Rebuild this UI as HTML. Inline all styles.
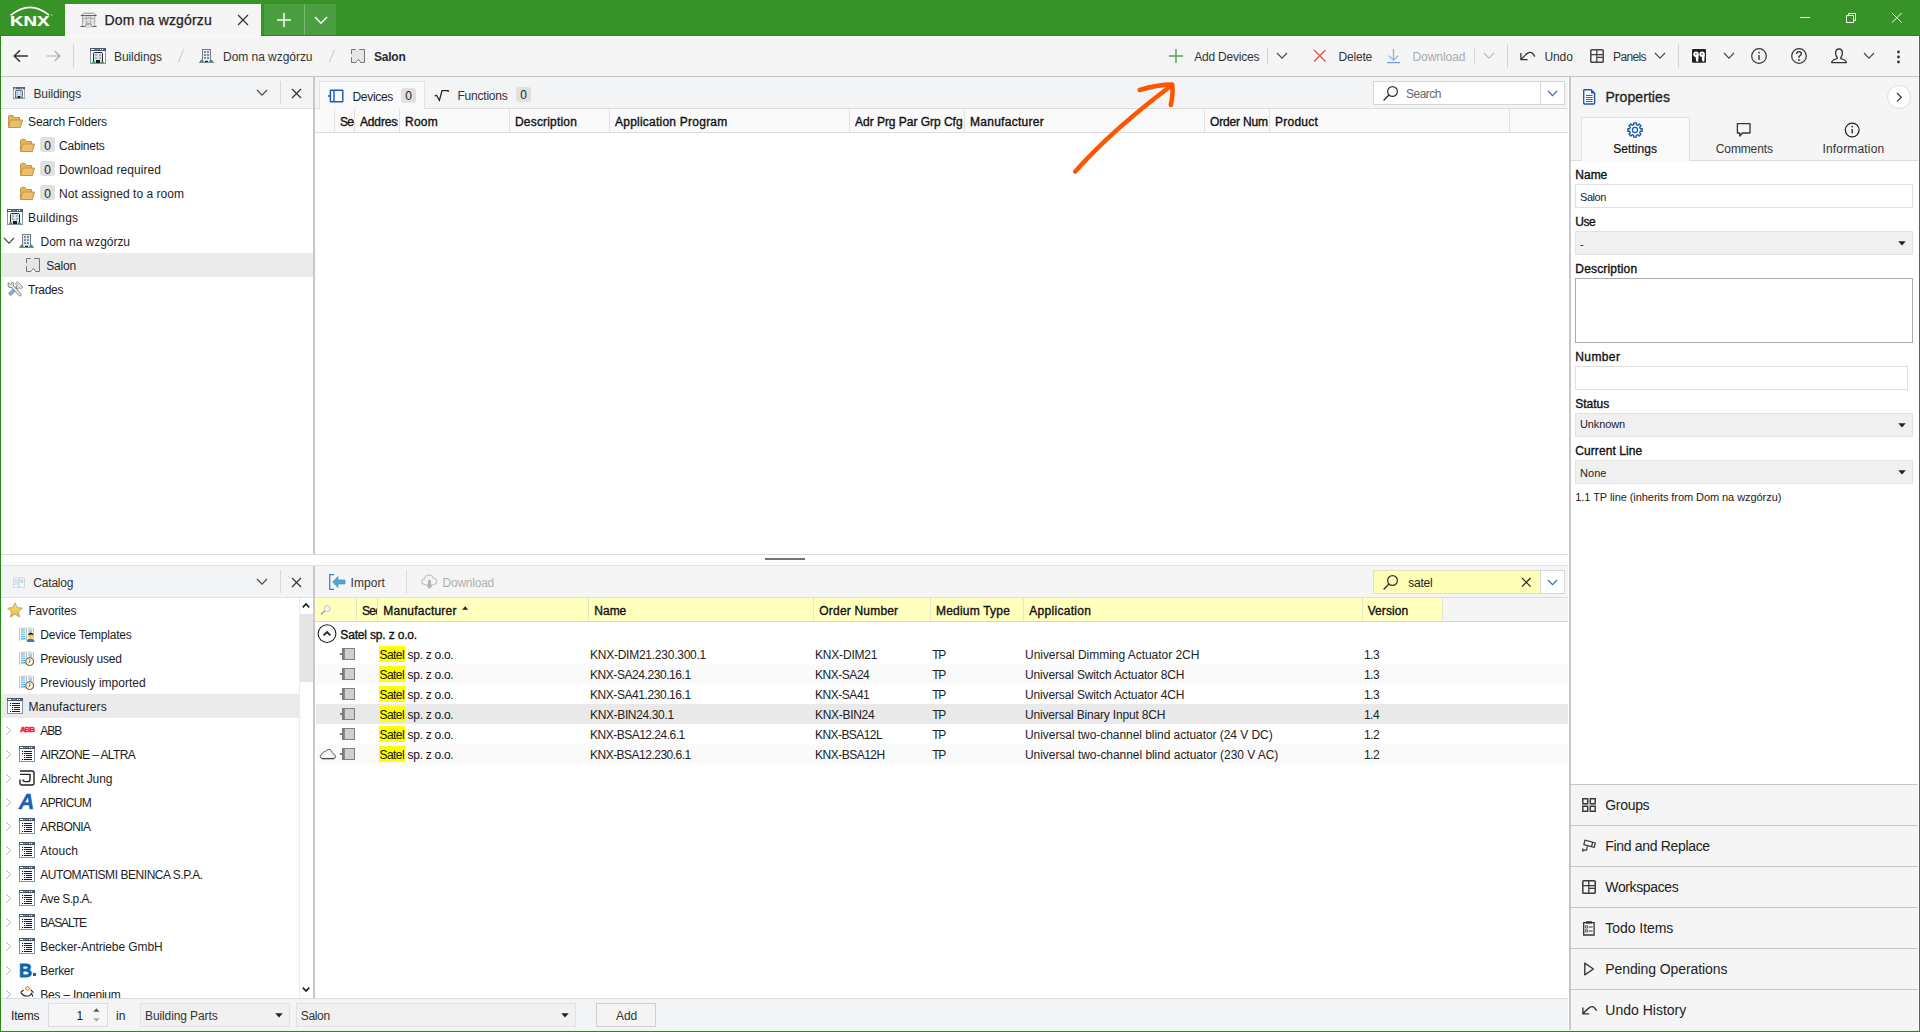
<!DOCTYPE html>
<html lang="en"><head><meta charset="utf-8"><title>ETS6 - Dom na wzgórzu</title>
<style>
html,body{margin:0;padding:0;}
body{width:1920px;height:1032px;overflow:hidden;position:relative;background:#fff;font-family:"Liberation Sans",sans-serif;}
#app{position:absolute;left:0;top:0;width:1920px;height:1032px;overflow:hidden;}
#app div,#app svg,#app span.t{position:absolute;}
#app span.t{white-space:pre;}
#app svg{overflow:visible;}
mark{background:#ffff00;color:inherit;}
</style></head><body><div id="app">
<div style="left:0px;top:0px;width:1920px;height:1032px;background:#268a14;"></div>
<div style="left:1px;top:1px;width:1918px;height:1030px;background:#fff;"></div>
<div style="left:0px;top:0px;width:1920px;height:35px;background:#379228;"></div>
<div style="left:0px;top:35px;width:1920px;height:1px;background:#268a14;"></div>
<svg style="left:8px;top:5px;" width="46" height="24" viewBox="0 0 46 24"><path d="M2.6 10.4 Q22 -5.6 41 10.2" fill="none" stroke="#fff" stroke-width="1.7"/><text x="2" y="20.6" font-family="Liberation Sans, sans-serif" font-weight="700" font-size="14.2" fill="#fff" stroke="#fff" stroke-width="0.15" textLength="39.5" lengthAdjust="spacingAndGlyphs">KNX</text><circle cx="43.8" cy="10" r="0.7" fill="#cfe6cb"/></svg>
<div style="left:65px;top:4px;width:196px;height:33px;background:#f5f5f5;"></div>
<div style="left:264px;top:4px;width:72px;height:31px;background:#79b871;"></div>
<div style="left:264px;top:4px;width:40px;height:31px;background:#4b9f40;"></div>
<div style="left:305px;top:4px;width:31px;height:31px;background:#4b9f40;"></div>
<svg style="left:276px;top:12px;" width="16" height="16" viewBox="0 0 16 16"><path d="M8 1 V15 M1 8 H15" stroke="#fff" stroke-width="1.5" fill="none"/></svg>
<svg style="left:313.5px;top:15.75px;" width="14" height="8.5" viewBox="0 0 14 8.5"><path d="M1 1 L7.0 7.2 L13 1" fill="none" stroke="#fff" stroke-width="1.5"/></svg>
<svg style="left:80px;top:12px;" width="18" height="16" viewBox="0 0 18 16"><path d="M1.2 3.5 L3.8 1.2 H13.6 L16.2 3.5 Z" fill="#ededed" stroke="#777" stroke-width="0.8" stroke-linejoin="round"/><rect x="2.6" y="3.6" width="12.2" height="10.8" fill="#f0f0f0" stroke="#9a9a9a" stroke-width="0.8"/><path d="M0.8 3.5 H16.6" stroke="#5e5e5e" stroke-width="1.1"/><path d="M2.6 6.3 H14.8 M6.2 3.6 V12 M10.8 3.6 V12" stroke="#9a9a9a" stroke-width="0.8" fill="none"/><ellipse cx="4.4" cy="9" rx="1.1" ry="1.9" fill="#fff" stroke="#aaa" stroke-width="0.5"/><ellipse cx="12.8" cy="9" rx="1.1" ry="1.9" fill="#fff" stroke="#aaa" stroke-width="0.5"/><ellipse cx="4.4" cy="2.4" rx="1.6" ry="0.5" fill="#fff"/><ellipse cx="12.8" cy="2.4" rx="1.6" ry="0.5" fill="#fff"/><path d="M7.8 5.6 Q8.5 3.4 9.2 5.6 Z M7.6 11.6 L8.1 8.6 Q8.5 7.4 8.9 8.6 L9.4 11.6 Z" fill="#fff" stroke="#999" stroke-width="0.5"/><path d="M4.8 14.4 L6.6 12 H10.6 L12.4 14.4" fill="#e4e4e4" stroke="#777" stroke-width="0.9"/><rect x="5.2" y="14.2" width="6.8" height="1.5" fill="#d6d6d6"/><path d="M0.6 14.5 H5 M12.2 14.5 H16.6" stroke="#5e5e5e" stroke-width="1.1"/></svg>
<span class="t" style="left:104.50px;top:10.00px;font-size:14px;line-height:20px;color:#222;letter-spacing:0.175px;-webkit-text-stroke:0.25px #222;">Dom na wzgórzu</span>
<svg style="left:236.5px;top:14.0px;" width="12" height="12" viewBox="0 0 12 12"><path d="M1 1 L11 11 M11 1 L1 11" fill="none" stroke="#333" stroke-width="1.2"/></svg>
<div style="left:1800px;top:17px;width:10px;height:1px;background:#fff;"></div>
<svg style="left:1845px;top:12px;" width="13" height="13" viewBox="0 0 13 13"><path d="M1.5 3.5 H8.5 V10.5 H1.5 Z M3.5 3.5 V1.5 H10.5 V8.5 H8.5" fill="none" stroke="#fff" stroke-width="1"/></svg>
<svg style="left:1891.2px;top:12.2px;" width="11.6" height="11.6" viewBox="0 0 11.6 11.6"><path d="M1 1 L10.6 10.6 M10.6 1 L1 10.6" fill="none" stroke="#fff" stroke-width="1.0"/></svg>
<div style="left:1px;top:36px;width:1918px;height:1px;background:#fdfdfd;"></div>
<div style="left:2px;top:37px;width:1916px;height:39px;background:#f5f5f5;"></div>
<div style="left:1px;top:76px;width:1918px;height:1px;background:#c6c6c6;"></div>
<svg style="left:13px;top:49px;" width="16" height="14" viewBox="0 0 16 14"><path d="M15 7 H1.5 M7 1.2 L1.2 7 L7 12.8" fill="none" stroke="#333" stroke-width="1.4"/></svg>
<svg style="left:46px;top:50px;" width="15" height="12" viewBox="0 0 15 12"><path d="M0.5 6 H13.5 M8.8 1 L13.8 6 L8.8 11" fill="none" stroke="#ababab" stroke-width="1.2"/></svg>
<div style="left:73px;top:44px;width:1px;height:24px;background:#d4d4d4;"></div>
<svg style="left:90px;top:48px;" width="16" height="16" viewBox="0 0 16 16"><rect x="0.5" y="0.5" width="15" height="15" fill="#fbfcfd" stroke="#8392a6"/><rect x="0" y="0" width="16" height="3" fill="#46566c"/><rect x="4.4" y="1" width="4.4" height="1" fill="#76869a"/><rect x="1" y="1" width="3" height="1" fill="#fff"/><rect x="10" y="1" width="1.2" height="1" fill="#fff"/><rect x="12" y="1" width="1.2" height="1" fill="#fff"/><rect x="14" y="1" width="1.2" height="1" fill="#e02a1f"/><path d="M3.5 14 V5.5 Q3.5 4.5 4.5 4.5 H11.5 Q12.5 4.5 12.5 5.5 V14" fill="#e4e4e4" stroke="#2a2a2a" stroke-width="1"/><rect x="5" y="6" width="2" height="2" fill="#8fb8d8"/><rect x="9" y="6" width="2" height="2" fill="#8fb8d8"/><rect x="5" y="9" width="2" height="2" fill="#8fb8d8"/><rect x="9" y="9" width="2" height="2" fill="#8fb8d8"/><rect x="6" y="12" width="4" height="3" fill="#1c1c1c"/><path d="M1.8 15 Q2.2 13.4 3.8 13 Q5.4 13.4 5.8 15 Z M10.2 15 Q10.6 13.4 12.2 13 Q13.8 13.4 14.2 15 Z" fill="#2fa044"/><rect x="1" y="15" width="14" height="0.6" fill="#8392a6"/></svg>
<span class="t" style="left:114.00px;top:47.50px;font-size:12px;line-height:18px;color:#333;letter-spacing:-0.078px;">Buildings</span>
<svg style="left:177px;top:49px;" width="8" height="14" viewBox="0 0 8 14"><path d="M6.6 0.5 L1.2 13.5" stroke="#c4c4c4" stroke-width="1" fill="none"/></svg>
<svg style="left:199px;top:49px;" width="15" height="14" viewBox="0 0 15 14"><rect x="3.5" y="0.5" width="8" height="13" fill="#ececec" stroke="#7d7d7d"/><rect x="5" y="2" width="2" height="2" fill="#6f8dbd"/><rect x="5" y="5" width="2" height="2" fill="#6f8dbd"/><rect x="5" y="8" width="2" height="2" fill="#6f8dbd"/><rect x="8" y="2" width="2" height="2" fill="#6f8dbd"/><rect x="8" y="5" width="2" height="2" fill="#6f8dbd"/><rect x="8" y="8" width="2" height="2" fill="#6f8dbd"/><rect x="6" y="11.8" width="3" height="1.4" fill="#1a1a1a"/><path d="M0.6 13.2 Q1 11.4 2.8 10.6 Q4.6 11.4 5 13.2 Z M10 13.2 Q10.4 11.4 12.2 10.6 Q14 11.4 14.4 13.2 Z" fill="#2f9e44"/><rect x="0" y="13" width="15" height="1" fill="#8088a0"/></svg>
<span class="t" style="left:223.00px;top:47.50px;font-size:12px;line-height:18px;color:#333;letter-spacing:-0.039px;">Dom na wzgórzu</span>
<svg style="left:328px;top:49px;" width="8" height="14" viewBox="0 0 8 14"><path d="M6.6 0.5 L1.2 13.5" stroke="#c4c4c4" stroke-width="1" fill="none"/></svg>
<svg style="left:351px;top:49px;" width="14" height="14" viewBox="0 0 14 14"><path d="M0.5 0.5 H13.5 V13.5 H9.6 L7.6 10.4 L4.9 13.5 H0.5 Z" fill="#e6e6e6" stroke="none"/><path d="M4.9 14 L7.6 10.6 L9.6 14 Z" fill="#fff"/><path d="M0.5 5 V0.5 H4.7 M8.2 0.5 H13.5 V13.5 H9.6 L7.6 10.4 L4.9 13.5 H0.5 V8.2" fill="none" stroke="#747474" stroke-width="1"/></svg>
<span class="t" style="left:374.00px;top:47.50px;font-size:12px;line-height:18px;color:#2a2a2a;letter-spacing:-0.234px;font-weight:700;">Salon</span>
<svg style="left:1168px;top:48px;" width="16" height="16" viewBox="0 0 16 16"><path d="M8 1 V15 M1 8 H15" stroke="#4fa54a" stroke-width="1.4" fill="none"/></svg>
<span class="t" style="left:1194.30px;top:47.50px;font-size:12px;line-height:18px;color:#333;letter-spacing:-0.216px;">Add Devices</span>
<div style="left:1267px;top:48px;width:1px;height:16px;background:#d0d0d0;"></div>
<svg style="left:1276.0px;top:52.35px;" width="12" height="7.5" viewBox="0 0 12 7.5"><path d="M1 1 L6.0 6.2 L11 1" fill="none" stroke="#444" stroke-width="1.1"/></svg>
<svg style="left:1313.25px;top:49.25px;" width="13.5" height="13.5" viewBox="0 0 13.5 13.5"><path d="M1 1 L12.5 12.5 M12.5 1 L1 12.5" fill="none" stroke="#d9534f" stroke-width="1.3"/></svg>
<span class="t" style="left:1338.50px;top:47.50px;font-size:12px;line-height:18px;color:#333;letter-spacing:-0.198px;">Delete</span>
<svg style="left:1386px;top:48px;" width="16" height="16" viewBox="0 0 16 16"><path d="M7.5 1 V12 M2.8 7.6 L7.5 12.2 L12.2 7.6" fill="none" stroke="#8db0e0" stroke-width="1.3"/><path d="M1 14.6 H14" stroke="#6f9fe0" stroke-width="1.3"/></svg>
<span class="t" style="left:1412.40px;top:47.50px;font-size:12px;line-height:18px;color:#ababab;letter-spacing:-0.047px;">Download</span>
<div style="left:1474px;top:48px;width:1px;height:16px;background:#d8d8d8;"></div>
<svg style="left:1483.0px;top:52.35px;" width="12" height="7.5" viewBox="0 0 12 7.5"><path d="M1 1 L6.0 6.2 L11 1" fill="none" stroke="#bcbcbc" stroke-width="1.1"/></svg>
<div style="left:1507px;top:44px;width:1px;height:24px;background:#d4d4d4;"></div>
<svg style="left:1520px;top:50px;" width="16" height="12" viewBox="0 0 16 12"><path d="M0.9 2.9 V9.7 H7.6 M1.2 9.4 Q5 5 7.4 3.4 Q11.8 0.4 14.8 6.6" fill="none" stroke="#333" stroke-width="1.3"/></svg>
<span class="t" style="left:1544.40px;top:47.50px;font-size:12px;line-height:18px;color:#333;letter-spacing:-0.072px;">Undo</span>
<svg style="left:1590px;top:49px;" width="14" height="14" viewBox="0 0 14 14"><rect x="0.8" y="0.8" width="12.4" height="12.4" rx="0.8" fill="none" stroke="#444" stroke-width="1.5"/><path d="M0.8 5.7 H13.2 M6.8 0.8 V13.2 M6.8 8.3 H13.2" fill="none" stroke="#444" stroke-width="1.3"/><rect x="7.4" y="6.3" width="5.2" height="1.4" fill="#bbb"/></svg>
<span class="t" style="left:1613.00px;top:47.50px;font-size:12px;line-height:18px;color:#333;letter-spacing:-0.617px;">Panels</span>
<svg style="left:1654.0px;top:52.35px;" width="12" height="7.5" viewBox="0 0 12 7.5"><path d="M1 1 L6.0 6.2 L11 1" fill="none" stroke="#444" stroke-width="1.1"/></svg>
<div style="left:1678px;top:44px;width:1px;height:24px;background:#d4d4d4;"></div>
<svg style="left:1692px;top:49px;" width="14" height="14" viewBox="0 0 14 14"><rect x="0" y="0" width="14" height="13.8" rx="1" fill="#222"/><circle cx="4" cy="5.2" r="2.7" fill="#fff"/><circle cx="10.1" cy="5.2" r="2.7" fill="#fff"/><path d="M3.4 6 H6.6 L6.2 12.6 H4.2 Z M9.5 6 H12.7 L12.3 12.6 H10.3 Z" fill="#fff"/><circle cx="3.9" cy="5" r="0.8" fill="#222"/><circle cx="10" cy="5" r="0.8" fill="#222"/></svg>
<svg style="left:1723.0px;top:52.35px;" width="12" height="7.5" viewBox="0 0 12 7.5"><path d="M1 1 L6.0 6.2 L11 1" fill="none" stroke="#444" stroke-width="1.1"/></svg>
<svg style="left:1750px;top:47px;" width="18" height="18" viewBox="0 0 18 18"><circle cx="9" cy="9" r="7.3" fill="none" stroke="#333" stroke-width="1.2"/><path d="M9 8 V13" stroke="#333" stroke-width="1.4"/><circle cx="9" cy="5.6" r="0.9" fill="#333"/></svg>
<svg style="left:1790px;top:47px;" width="18" height="18" viewBox="0 0 18 18"><circle cx="9" cy="9" r="7.3" fill="none" stroke="#333" stroke-width="1.2"/><path d="M6.6 7 Q6.6 4.6 9 4.6 Q11.4 4.6 11.4 6.8 Q11.4 8.2 9 9.4 V11" fill="none" stroke="#333" stroke-width="1.3"/><circle cx="9" cy="13" r="0.9" fill="#333"/></svg>
<svg style="left:1830px;top:48px;" width="18" height="16" viewBox="0 0 18 16"><path d="M9 1 Q12.4 1 12.4 5 Q12.4 8 10.8 9.4 V10.6 Q15.8 11.6 16.4 14.6 H1.6 Q2.2 11.6 7.2 10.6 V9.4 Q5.6 8 5.6 5 Q5.6 1 9 1 Z" fill="none" stroke="#333" stroke-width="1.3" stroke-linejoin="round"/></svg>
<svg style="left:1863.0px;top:52.35px;" width="12" height="7.5" viewBox="0 0 12 7.5"><path d="M1 1 L6.0 6.2 L11 1" fill="none" stroke="#444" stroke-width="1.1"/></svg>
<svg style="left:1896px;top:50px;" width="5" height="14" viewBox="0 0 5 14"><circle cx="2.5" cy="2" r="1.4" fill="#333"/><circle cx="2.5" cy="7" r="1.4" fill="#333"/><circle cx="2.5" cy="12" r="1.4" fill="#333"/></svg>
<div style="left:1px;top:77px;width:312px;height:31px;background:#f3f4f6;"></div>
<div style="left:1px;top:108px;width:312px;height:1px;background:#dedede;"></div>
<svg style="left:13px;top:87px;" width="12" height="12" viewBox="0 0 16 16"><rect x="0.5" y="0.5" width="15" height="15" fill="#fbfcfd" stroke="#8392a6"/><rect x="0" y="0" width="16" height="3" fill="#46566c"/><rect x="4.4" y="1" width="4.4" height="1" fill="#76869a"/><rect x="1" y="1" width="3" height="1" fill="#fff"/><rect x="10" y="1" width="1.2" height="1" fill="#fff"/><rect x="12" y="1" width="1.2" height="1" fill="#fff"/><rect x="14" y="1" width="1.2" height="1" fill="#e02a1f"/><path d="M3.5 14 V5.5 Q3.5 4.5 4.5 4.5 H11.5 Q12.5 4.5 12.5 5.5 V14" fill="#e4e4e4" stroke="#2a2a2a" stroke-width="1"/><rect x="5" y="6" width="2" height="2" fill="#8fb8d8"/><rect x="9" y="6" width="2" height="2" fill="#8fb8d8"/><rect x="5" y="9" width="2" height="2" fill="#8fb8d8"/><rect x="9" y="9" width="2" height="2" fill="#8fb8d8"/><rect x="6" y="12" width="4" height="3" fill="#1c1c1c"/><path d="M1.8 15 Q2.2 13.4 3.8 13 Q5.4 13.4 5.8 15 Z M10.2 15 Q10.6 13.4 12.2 13 Q13.8 13.4 14.2 15 Z" fill="#2fa044"/><rect x="1" y="15" width="14" height="0.6" fill="#8392a6"/></svg>
<span class="t" style="left:33.50px;top:84.50px;font-size:12px;line-height:18px;color:#333;letter-spacing:-0.134px;">Buildings</span>
<svg style="left:256.0px;top:89.45px;" width="12" height="7.5" viewBox="0 0 12 7.5"><path d="M1 1 L6.0 6.2 L11 1" fill="none" stroke="#444" stroke-width="1.1"/></svg>
<div style="left:280px;top:81px;width:1px;height:23px;background:#d8d8d8;"></div>
<svg style="left:291.2px;top:87.5px;" width="11" height="11" viewBox="0 0 11 11"><path d="M1 1 L10 10 M10 1 L1 10" fill="none" stroke="#333" stroke-width="1.2"/></svg>
<div style="left:313px;top:77px;width:2px;height:477px;background:#c8c8c8;"></div>
<div style="left:1569px;top:77px;width:2px;height:954px;background:#c8c8c8;"></div>
<svg style="left:8px;top:115px;" width="15" height="13" viewBox="0 0 15 13"><path d="M0.5 12.5 V1.5 Q0.5 0.5 1.5 0.5 H5 L6.5 2.5 H11.5 V5" fill="#e6b45a" stroke="#c8924a" stroke-width="1"/><path d="M0.5 12.5 L2.8 5 H14.5 L12.3 12.5 Z" fill="#ecc067" stroke="#c8924a" stroke-width="1" stroke-linejoin="round"/></svg>
<span class="t" style="left:28.10px;top:112.50px;font-size:12px;line-height:18px;color:#1e1e1e;letter-spacing:-0.191px;">Search Folders</span>
<svg style="left:20px;top:139px;" width="15" height="13" viewBox="0 0 15 13"><path d="M0.5 12.5 V1.5 Q0.5 0.5 1.5 0.5 H5 L6.5 2.5 H11.5 V5" fill="#e6b45a" stroke="#c8924a" stroke-width="1"/><path d="M0.5 12.5 L2.8 5 H14.5 L12.3 12.5 Z" fill="#ecc067" stroke="#c8924a" stroke-width="1" stroke-linejoin="round"/></svg>
<div style="left:40px;top:137px;width:15px;height:15px;background:#e0e0e0;border-radius:3px;"></div>
<span class="t" style="left:44.24px;top:136.50px;font-size:12px;line-height:18px;color:#222;letter-spacing:-0.167px;">0</span>
<span class="t" style="left:59.10px;top:136.50px;font-size:12px;line-height:18px;color:#1e1e1e;letter-spacing:-0.234px;">Cabinets</span>
<svg style="left:20px;top:163px;" width="15" height="13" viewBox="0 0 15 13"><path d="M0.5 12.5 V1.5 Q0.5 0.5 1.5 0.5 H5 L6.5 2.5 H11.5 V5" fill="#e6b45a" stroke="#c8924a" stroke-width="1"/><path d="M0.5 12.5 L2.8 5 H14.5 L12.3 12.5 Z" fill="#ecc067" stroke="#c8924a" stroke-width="1" stroke-linejoin="round"/></svg>
<div style="left:40px;top:161px;width:15px;height:15px;background:#e0e0e0;border-radius:3px;"></div>
<span class="t" style="left:44.24px;top:160.50px;font-size:12px;line-height:18px;color:#222;letter-spacing:-0.167px;">0</span>
<span class="t" style="left:59.10px;top:160.50px;font-size:12px;line-height:18px;color:#1e1e1e;letter-spacing:0.074px;">Download required</span>
<svg style="left:20px;top:187px;" width="15" height="13" viewBox="0 0 15 13"><path d="M0.5 12.5 V1.5 Q0.5 0.5 1.5 0.5 H5 L6.5 2.5 H11.5 V5" fill="#e6b45a" stroke="#c8924a" stroke-width="1"/><path d="M0.5 12.5 L2.8 5 H14.5 L12.3 12.5 Z" fill="#ecc067" stroke="#c8924a" stroke-width="1" stroke-linejoin="round"/></svg>
<div style="left:40px;top:185px;width:15px;height:15px;background:#e0e0e0;border-radius:3px;"></div>
<span class="t" style="left:44.24px;top:184.50px;font-size:12px;line-height:18px;color:#222;letter-spacing:-0.167px;">0</span>
<span class="t" style="left:59.10px;top:184.50px;font-size:12px;line-height:18px;color:#1e1e1e;letter-spacing:0.042px;">Not assigned to a room</span>
<svg style="left:7px;top:209px;" width="16" height="16" viewBox="0 0 16 16"><rect x="0.5" y="0.5" width="15" height="15" fill="#fbfcfd" stroke="#8392a6"/><rect x="0" y="0" width="16" height="3" fill="#46566c"/><rect x="4.4" y="1" width="4.4" height="1" fill="#76869a"/><rect x="1" y="1" width="3" height="1" fill="#fff"/><rect x="10" y="1" width="1.2" height="1" fill="#fff"/><rect x="12" y="1" width="1.2" height="1" fill="#fff"/><rect x="14" y="1" width="1.2" height="1" fill="#e02a1f"/><path d="M3.5 14 V5.5 Q3.5 4.5 4.5 4.5 H11.5 Q12.5 4.5 12.5 5.5 V14" fill="#e4e4e4" stroke="#2a2a2a" stroke-width="1"/><rect x="5" y="6" width="2" height="2" fill="#8fb8d8"/><rect x="9" y="6" width="2" height="2" fill="#8fb8d8"/><rect x="5" y="9" width="2" height="2" fill="#8fb8d8"/><rect x="9" y="9" width="2" height="2" fill="#8fb8d8"/><rect x="6" y="12" width="4" height="3" fill="#1c1c1c"/><path d="M1.8 15 Q2.2 13.4 3.8 13 Q5.4 13.4 5.8 15 Z M10.2 15 Q10.6 13.4 12.2 13 Q13.8 13.4 14.2 15 Z" fill="#2fa044"/><rect x="1" y="15" width="14" height="0.6" fill="#8392a6"/></svg>
<span class="t" style="left:28.10px;top:208.50px;font-size:12px;line-height:18px;color:#1e1e1e;letter-spacing:0.144px;">Buildings</span>
<svg style="left:3.0px;top:237.45px;" width="12" height="7.5" viewBox="0 0 12 7.5"><path d="M1 1 L6.0 6.2 L11 1" fill="none" stroke="#444" stroke-width="1.1"/></svg>
<svg style="left:19px;top:234px;" width="15" height="14" viewBox="0 0 15 14"><rect x="3.5" y="0.5" width="8" height="13" fill="#ececec" stroke="#7d7d7d"/><rect x="5" y="2" width="2" height="2" fill="#6f8dbd"/><rect x="5" y="5" width="2" height="2" fill="#6f8dbd"/><rect x="5" y="8" width="2" height="2" fill="#6f8dbd"/><rect x="8" y="2" width="2" height="2" fill="#6f8dbd"/><rect x="8" y="5" width="2" height="2" fill="#6f8dbd"/><rect x="8" y="8" width="2" height="2" fill="#6f8dbd"/><rect x="6" y="11.8" width="3" height="1.4" fill="#1a1a1a"/><path d="M0.6 13.2 Q1 11.4 2.8 10.6 Q4.6 11.4 5 13.2 Z M10 13.2 Q10.4 11.4 12.2 10.6 Q14 11.4 14.4 13.2 Z" fill="#2f9e44"/><rect x="0" y="13" width="15" height="1" fill="#8088a0"/></svg>
<span class="t" style="left:40.50px;top:232.50px;font-size:12px;line-height:18px;color:#1e1e1e;letter-spacing:-0.039px;">Dom na wzgórzu</span>
<div style="left:1px;top:253px;width:312px;height:24px;background:#ebebeb;"></div>
<svg style="left:26px;top:258px;" width="14" height="14" viewBox="0 0 14 14"><path d="M0.5 0.5 H13.5 V13.5 H9.6 L7.6 10.4 L4.9 13.5 H0.5 Z" fill="#e6e6e6" stroke="none"/><path d="M4.9 14 L7.6 10.6 L9.6 14 Z" fill="#fff"/><path d="M0.5 5 V0.5 H4.7 M8.2 0.5 H13.5 V13.5 H9.6 L7.6 10.4 L4.9 13.5 H0.5 V8.2" fill="none" stroke="#747474" stroke-width="1"/></svg>
<span class="t" style="left:46.30px;top:256.50px;font-size:12px;line-height:18px;color:#1e1e1e;letter-spacing:-0.221px;">Salon</span>
<svg style="left:7px;top:281px;" width="16" height="16" viewBox="0 0 16 16"><g fill="none"><path d="M2.4 13.8 L7 9.2" stroke="#5a8cc8" stroke-width="3.4" stroke-linecap="butt"/><path d="M2.4 13.8 L7 9.2" stroke="#86b2e0" stroke-width="2.2" stroke-linecap="butt"/><path d="M7 9.2 L10.6 5.6" stroke="#8f8f8f" stroke-width="2.2"/><path d="M10.4 0.8 L15.8 5.9 L13.8 7.9 L12.2 6.6 L10.8 7.8 L8.9 6 L10.2 4.8 L8.4 2.7 Z" fill="#e2e2e2" stroke="#868686" stroke-width="0.9" stroke-linejoin="round"/><path d="M4.6 4.6 L13 13.6" stroke="#868686" stroke-width="3.4" stroke-linecap="round"/><circle cx="3.8" cy="3.8" r="3.2" fill="#868686"/><path d="M4.6 4.6 L13 13.6" stroke="#ececec" stroke-width="1.7" stroke-linecap="round"/><circle cx="3.8" cy="3.8" r="2.3" fill="#ececec"/><path d="M0.2 0.2 L3.6 3.8 L5.6 0.2 Z" fill="#fff"/><path d="M1.4 1.6 L3.6 3.9 L4.9 1.4" stroke="#868686" stroke-width="0.9" stroke-linejoin="round"/></g></svg>
<span class="t" style="left:28.10px;top:280.50px;font-size:12px;line-height:18px;color:#1e1e1e;letter-spacing:-0.318px;">Trades</span>
<div style="left:315px;top:77px;width:1253px;height:31px;background:#f3f4f6;"></div>
<div style="left:315px;top:108px;width:1253px;height:1px;background:#dcdcdc;"></div>
<div style="left:319px;top:81px;width:106px;height:28px;background:#fafafa;border:1px solid #e2e2e2;border-bottom:none;box-sizing:border-box;"></div>
<svg style="left:328px;top:89px;" width="16" height="14" viewBox="0 0 16 14"><rect x="2.4" y="1.2" width="12.4" height="11.6" rx="0.3" fill="none" stroke="#1f56b0" stroke-width="1.4"/><path d="M6 1.2 V12.8 M0 7 H2.2" stroke="#1f56b0" stroke-width="1.4" fill="none"/></svg>
<span class="t" style="left:352.50px;top:87.50px;font-size:12px;line-height:18px;color:#1e1e1e;letter-spacing:-0.312px;">Devices</span>
<div style="left:401px;top:88px;width:15px;height:15px;background:#e0e0e0;border-radius:3px;"></div>
<span class="t" style="left:405.24px;top:86.80px;font-size:12px;line-height:18px;color:#222;letter-spacing:-0.167px;">0</span>
<svg style="left:434px;top:89px;" width="15" height="13" viewBox="0 0 15 13"><path d="M0.6 7 L2.5 6.3 L5.4 11.4 L8 1.5 H14.2 V3" fill="none" stroke="#222" stroke-width="1.25"/></svg>
<span class="t" style="left:457.50px;top:86.50px;font-size:12px;line-height:18px;color:#333;letter-spacing:-0.226px;">Functions</span>
<div style="left:516px;top:87px;width:15px;height:15px;background:#e0e0e0;border-radius:3px;"></div>
<span class="t" style="left:520.24px;top:85.80px;font-size:12px;line-height:18px;color:#222;letter-spacing:-0.167px;">0</span>
<div style="left:1373px;top:81px;width:168px;height:24px;background:#fff;border:1px solid #d6d6d6;box-sizing:border-box;"></div>
<div style="left:1540px;top:81px;width:25px;height:24px;background:#fff;border:1px solid #d6d6d6;box-sizing:border-box;"></div>
<svg style="left:1382.5px;top:85.5px;" width="15" height="15" viewBox="0 0 15 15"><circle cx="9.5" cy="5.5" r="4.9" fill="none" stroke="#333" stroke-width="1.2"/><path d="M6 9 L0.6 14.4" stroke="#333" stroke-width="1.4"/></svg>
<span class="t" style="left:1406.00px;top:84.50px;font-size:12px;line-height:18px;color:#666;letter-spacing:-0.505px;">Search</span>
<svg style="left:1546.5px;top:89.5px;" width="11" height="7" viewBox="0 0 11 7"><path d="M1 1 L5.5 5.7 L10 1" fill="none" stroke="#3468c0" stroke-width="1.15"/></svg>
<div style="left:315px;top:109px;width:1253px;height:23px;background:#fafafa;"></div>
<div style="left:315px;top:132px;width:1253px;height:1px;background:#dcdcdc;"></div>
<div style="left:334px;top:109px;width:1px;height:23px;background:#e2e2e2;"></div>
<div style="left:354px;top:109px;width:1px;height:23px;background:#e2e2e2;"></div>
<div style="left:399px;top:109px;width:1px;height:23px;background:#e2e2e2;"></div>
<div style="left:509px;top:109px;width:1px;height:23px;background:#e2e2e2;"></div>
<div style="left:609px;top:109px;width:1px;height:23px;background:#e2e2e2;"></div>
<div style="left:849px;top:109px;width:1px;height:23px;background:#e2e2e2;"></div>
<div style="left:964px;top:109px;width:1px;height:23px;background:#e2e2e2;"></div>
<div style="left:1204px;top:109px;width:1px;height:23px;background:#e2e2e2;"></div>
<div style="left:1269px;top:109px;width:1px;height:23px;background:#e2e2e2;"></div>
<div style="left:1509px;top:109px;width:1px;height:23px;background:#e2e2e2;"></div>
<div style="left:340px;top:112.5px;width:13.6px;height:18px;overflow:hidden;">
<span class="t" style="left:0.00px;top:0.00px;font-size:12px;line-height:18px;color:#111;letter-spacing:-0.763px;-webkit-text-stroke:0.35px #111;">Sec</span>
</div>
<div style="left:360px;top:112.5px;width:38px;height:18px;overflow:hidden;">
<span class="t" style="left:0.00px;top:0.00px;font-size:12px;line-height:18px;color:#111;letter-spacing:-0.157px;-webkit-text-stroke:0.35px #111;">Address</span>
</div>
<span class="t" style="left:405.00px;top:112.50px;font-size:12px;line-height:18px;color:#111;letter-spacing:0.246px;-webkit-text-stroke:0.35px #111;">Room</span>
<span class="t" style="left:515.00px;top:112.50px;font-size:12px;line-height:18px;color:#111;letter-spacing:0.179px;-webkit-text-stroke:0.35px #111;">Description</span>
<span class="t" style="left:615.00px;top:112.50px;font-size:12px;line-height:18px;color:#111;letter-spacing:0.234px;-webkit-text-stroke:0.35px #111;">Application Program</span>
<div style="left:855px;top:112.5px;width:108.5px;height:18px;overflow:hidden;">
<span class="t" style="left:0.00px;top:0.00px;font-size:12px;line-height:18px;color:#111;letter-spacing:-0.024px;-webkit-text-stroke:0.35px #111;">Adr Prg Par Grp Cfg</span>
</div>
<span class="t" style="left:970.00px;top:112.50px;font-size:12px;line-height:18px;color:#111;letter-spacing:0.275px;-webkit-text-stroke:0.35px #111;">Manufacturer</span>
<div style="left:1210px;top:112.5px;width:58px;height:18px;overflow:hidden;">
<span class="t" style="left:0.00px;top:0.00px;font-size:12px;line-height:18px;color:#111;letter-spacing:-0.160px;-webkit-text-stroke:0.35px #111;">Order Number</span>
</div>
<span class="t" style="left:1275.00px;top:112.50px;font-size:12px;line-height:18px;color:#111;letter-spacing:0.234px;-webkit-text-stroke:0.35px #111;">Product</span>
<svg style="left:1060px;top:76px;" width="130" height="104" viewBox="0 0 130 104"><g fill="none" stroke="#ff5500" stroke-linecap="round" stroke-linejoin="round"><path d="M15.2 95.6 Q52 54 111.5 9.5" stroke-width="4.6"/><path d="M79.8 14 Q97 8.6 112.2 8.6 Q113.4 18 110.8 29" stroke-width="4.6"/></g></svg>
<div style="left:1px;top:554px;width:1567px;height:1px;background:#dcdcdc;"></div>
<div style="left:765px;top:558.4px;width:40px;height:2px;background:#737373;"></div>
<div style="left:1571px;top:77px;width:347px;height:83px;background:#f5f5f5;"></div>
<div style="left:1571px;top:160px;width:347px;height:1px;background:#dcdcdc;"></div>
<svg style="left:1583px;top:89px;" width="13" height="16" viewBox="0 0 13 16"><path d="M1.6 0.8 H8 L11.6 4.4 V14 Q11.6 15 10.6 15 H1.6 Q0.7 15 0.7 14 V1.8 Q0.7 0.8 1.6 0.8 Z" fill="#fff" stroke="#1f56b0" stroke-width="1.4"/><path d="M8 0.8 V4.4 H11.6 Z" fill="#1f56b0"/><path d="M3 6.5 H9.6 M3 8.5 H9.6 M3 10.5 H9.6 M3 12.5 H9.6" stroke="#2f63bc" stroke-width="1"/></svg>
<span class="t" style="left:1605.40px;top:87.00px;font-size:14px;line-height:20px;color:#222;letter-spacing:0.079px;-webkit-text-stroke:0.3px #222;">Properties</span>
<div style="left:1887px;top:85px;width:24px;height:24px;background:#fff;border:1px solid #dedede;border-radius:12px;box-sizing:border-box;"></div>
<svg style="left:1896.0px;top:91.7px;" width="6.6" height="10.6" viewBox="0 0 6.6 10.6"><path d="M1 1 L5.3 5.3 L1 9.6" fill="none" stroke="#333" stroke-width="1.2"/></svg>
<div style="left:1581px;top:117px;width:109px;height:44px;background:#fafafa;border:1px solid #e0e0e0;border-bottom:none;box-sizing:border-box;"></div>
<svg style="left:1626px;top:121px;" width="18" height="18" viewBox="0 0 18 18"><path d="M7.74 1.81 L10.26 1.81 L10.28 3.65 L11.87 4.31 L13.20 3.03 L14.97 4.80 L13.69 6.13 L14.35 7.72 L16.19 7.74 L16.19 10.26 L14.35 10.28 L13.69 11.87 L14.97 13.20 L13.20 14.97 L11.87 13.69 L10.28 14.35 L10.26 16.19 L7.74 16.19 L7.72 14.35 L6.13 13.69 L4.80 14.97 L3.03 13.20 L4.31 11.87 L3.65 10.28 L1.81 10.26 L1.81 7.74 L3.65 7.72 L4.31 6.13 L3.03 4.80 L4.80 3.03 L6.13 4.31 L7.72 3.65 Z" fill="none" stroke="#1f56b0" stroke-width="1.35" stroke-linejoin="round"/><circle cx="9" cy="9" r="2.6" fill="none" stroke="#1f56b0" stroke-width="1.2"/></svg>
<span class="t" style="left:1613.20px;top:140.00px;font-size:12px;line-height:18px;color:#111;letter-spacing:0.080px;-webkit-text-stroke:0.2px #111;">Settings</span>
<svg style="left:1736px;top:122px;" width="16" height="16" viewBox="0 0 16 16"><path d="M1.4 1.6 H14 V11 H6.4 L3.8 14 V11 H1.4 Z" fill="none" stroke="#333" stroke-width="1.3" stroke-linejoin="round"/></svg>
<span class="t" style="left:1715.80px;top:140.00px;font-size:12px;line-height:18px;color:#333;letter-spacing:-0.127px;">Comments</span>
<svg style="left:1843px;top:121px;" width="18" height="18" viewBox="0 0 18 18"><circle cx="9.2" cy="9" r="6.9" fill="none" stroke="#222" stroke-width="1.2"/><path d="M9.2 8 V12.6" stroke="#222" stroke-width="1.3"/><circle cx="9.2" cy="5.6" r="0.85" fill="#222"/></svg>
<span class="t" style="left:1822.50px;top:140.00px;font-size:12px;line-height:18px;color:#333;letter-spacing:0.161px;">Information</span>
<span class="t" style="left:1575.30px;top:166.00px;font-size:12px;line-height:18px;color:#111;letter-spacing:-0.004px;-webkit-text-stroke:0.35px #111;">Name</span>
<div style="left:1575px;top:184px;width:338px;height:24px;background:#fff;border:1px solid #e0e0e0;box-sizing:border-box;"></div>
<span class="t" style="left:1580.00px;top:189.00px;font-size:11px;line-height:17px;color:#222;letter-spacing:-0.428px;">Salon</span>
<span class="t" style="left:1575.30px;top:213.00px;font-size:12px;line-height:18px;color:#111;letter-spacing:-0.448px;-webkit-text-stroke:0.35px #111;">Use</span>
<div style="left:1575px;top:231px;width:338px;height:24px;background:#f0f0f0;border:1px solid #e2e2e2;box-sizing:border-box;"></div>
<span class="t" style="left:1580.00px;top:236.00px;font-size:11px;line-height:17px;color:#222;letter-spacing:-0.092px;">-</span>
<svg style="left:1897.6px;top:241px;" width="8" height="5" viewBox="0 0 8 5"><path d="M0.3 0.3 H7.7 L4 4.4 Z" fill="#222"/></svg>
<span class="t" style="left:1575.30px;top:259.50px;font-size:12px;line-height:18px;color:#111;letter-spacing:0.179px;-webkit-text-stroke:0.35px #111;">Description</span>
<div style="left:1575px;top:278px;width:338px;height:65px;background:#fff;border:1px solid #ababab;box-sizing:border-box;"></div>
<span class="t" style="left:1575.30px;top:348.00px;font-size:12px;line-height:18px;color:#111;letter-spacing:0.385px;-webkit-text-stroke:0.35px #111;">Number</span>
<div style="left:1575px;top:366px;width:333px;height:24px;background:#fff;border:1px solid #e0e0e0;box-sizing:border-box;"></div>
<span class="t" style="left:1575.30px;top:395.00px;font-size:12px;line-height:18px;color:#111;letter-spacing:-0.005px;-webkit-text-stroke:0.35px #111;">Status</span>
<div style="left:1575px;top:413px;width:338px;height:24px;background:#f0f0f0;border:1px solid #e2e2e2;box-sizing:border-box;"></div>
<span class="t" style="left:1580.00px;top:416.00px;font-size:11px;line-height:17px;color:#222;letter-spacing:-0.123px;">Unknown</span>
<svg style="left:1897.6px;top:423px;" width="8" height="5" viewBox="0 0 8 5"><path d="M0.3 0.3 H7.7 L4 4.4 Z" fill="#222"/></svg>
<span class="t" style="left:1575.30px;top:441.50px;font-size:12px;line-height:18px;color:#111;letter-spacing:0.079px;-webkit-text-stroke:0.35px #111;">Current Line</span>
<div style="left:1575px;top:460px;width:338px;height:24px;background:#f0f0f0;border:1px solid #e2e2e2;box-sizing:border-box;"></div>
<span class="t" style="left:1580.00px;top:465.00px;font-size:11px;line-height:17px;color:#222;letter-spacing:0.051px;">None</span>
<svg style="left:1897.6px;top:470px;" width="8" height="5" viewBox="0 0 8 5"><path d="M0.3 0.3 H7.7 L4 4.4 Z" fill="#222"/></svg>
<span class="t" style="left:1575.30px;top:489.00px;font-size:11px;line-height:17px;color:#222;letter-spacing:-0.064px;">1.1 TP line (inherits from Dom na wzgórzu)</span>
<div style="left:1571px;top:784px;width:347px;height:247px;background:#f5f5f5;"></div>
<div style="left:1571px;top:784px;width:347px;height:1px;background:#c8c8c8;"></div>
<svg style="left:1582px;top:798px;" width="16" height="15" viewBox="0 0 16 15"><path d="M0.8 0.8 H5.7 V5.7 H0.8 Z M8.3 0.8 H13.2 V5.7 H8.3 Z M0.8 8.3 H5.7 V13.2 H0.8 Z M8.3 8.3 H13.2 V13.2 H8.3 Z" fill="none" stroke="#3a3a3a" stroke-width="1.45"/><path d="M5.7 3.2 H8.3 M5.7 10.8 H8.3 M3.2 5.7 V8.3 M10.8 5.7 V8.3" stroke="#777" stroke-width="0.8"/></svg>
<span class="t" style="left:1605.30px;top:794.80px;font-size:14px;line-height:20px;color:#222;letter-spacing:-0.320px;">Groups</span>
<div style="left:1571px;top:825px;width:347px;height:1px;background:#c8c8c8;"></div>
<svg style="left:1582px;top:839px;" width="16" height="15" viewBox="0 0 16 15"><path d="M3 1.2 L13.4 4 L12.2 8.4 L1.8 5.6 Z M10.6 3.4 L9.6 7.6 M5.4 6.8 L4.6 11 H0.8 M0.8 9.6 V12.8" fill="none" stroke="#3a3a3a" stroke-width="1.25" stroke-linejoin="round"/></svg>
<span class="t" style="left:1605.30px;top:835.80px;font-size:14px;line-height:20px;color:#222;letter-spacing:-0.328px;">Find and Replace</span>
<div style="left:1571px;top:866px;width:347px;height:1px;background:#c8c8c8;"></div>
<svg style="left:1582px;top:880px;" width="16" height="15" viewBox="0 0 16 15"><rect x="0.8" y="0.8" width="12.4" height="12.4" rx="0.8" fill="none" stroke="#3a3a3a" stroke-width="1.5"/><path d="M0.8 5.7 H13.2 M6.8 0.8 V13.2 M6.8 8.3 H13.2" fill="none" stroke="#3a3a3a" stroke-width="1.3"/><rect x="7.4" y="6.3" width="5.2" height="1.4" fill="#bbb"/></svg>
<span class="t" style="left:1605.30px;top:876.80px;font-size:14px;line-height:20px;color:#222;letter-spacing:-0.378px;">Workspaces</span>
<div style="left:1571px;top:907px;width:347px;height:1px;background:#c8c8c8;"></div>
<svg style="left:1582px;top:921px;" width="16" height="15" viewBox="0 0 16 15"><path d="M1.7 1.6 H12.1 V14 H1.7 Z" fill="none" stroke="#333" stroke-width="1.3"/><rect x="4" y="0.2" width="5.8" height="2.4" fill="#333"/><path d="M3.6 4.8 H5.8 V7 H3.6 Z M3.6 8.8 H5.8 V11 H3.6 Z" fill="none" stroke="#333" stroke-width="0.8"/><path d="M7 6 H10.6 M7 10 H10.6" stroke="#333" stroke-width="1"/></svg>
<span class="t" style="left:1605.30px;top:917.80px;font-size:14px;line-height:20px;color:#222;letter-spacing:-0.048px;">Todo Items</span>
<div style="left:1571px;top:948px;width:347px;height:1px;background:#c8c8c8;"></div>
<svg style="left:1582px;top:962px;" width="16" height="15" viewBox="0 0 16 15"><path d="M2.8 1.2 L11.4 7 L2.8 12.8 Z" fill="none" stroke="#3a3a3a" stroke-width="1.45" stroke-linejoin="round"/></svg>
<span class="t" style="left:1605.30px;top:958.80px;font-size:14px;line-height:20px;color:#222;letter-spacing:-0.098px;">Pending Operations</span>
<div style="left:1571px;top:989px;width:347px;height:1px;background:#c8c8c8;"></div>
<svg style="left:1582px;top:1003px;" width="16" height="15" viewBox="0 0 16 15"><path d="M0.9 4.4 V10.8 H7.2 M1.2 10.5 Q5 6.2 7.4 4.6 Q11.6 1.8 14.6 7.6" fill="none" stroke="#333" stroke-width="1.35"/></svg>
<span class="t" style="left:1605.30px;top:999.80px;font-size:14px;line-height:20px;color:#222;letter-spacing:0.007px;">Undo History</span>
<div style="left:1px;top:565px;width:1567px;height:1px;background:#e2e2e2;"></div>
<div style="left:1px;top:566px;width:312px;height:31px;background:#f3f4f6;"></div>
<div style="left:1px;top:597px;width:312px;height:1px;background:#dedede;"></div>
<div style="left:313px;top:566px;width:2px;height:433px;background:#c8c8c8;"></div>
<svg style="left:13px;top:576.6px;" width="12" height="12" viewBox="0 0 12 12"><path d="M0.5 1.2 L3.6 0.6 L5.8 1.4 V10.6 L3.6 10 L0.5 10.6 Z M5.8 1.4 L8 0.6 L11.5 1.2 V10.6 L8 10 L5.8 10.6 Z" fill="#fafafa" stroke="#c4c4c4" stroke-width="0.7"/><path d="M1.6 3 H4.6 M1.6 5 H4.6 M1.6 7 H4.6" stroke="#7cc4ee" stroke-width="0.8"/><rect x="7.4" y="2.4" width="2.8" height="3.4" fill="#a5d8f6"/></svg>
<span class="t" style="left:33.30px;top:573.50px;font-size:12px;line-height:18px;color:#333;letter-spacing:-0.196px;">Catalog</span>
<svg style="left:256.0px;top:578.45px;" width="12" height="7.5" viewBox="0 0 12 7.5"><path d="M1 1 L6.0 6.2 L11 1" fill="none" stroke="#444" stroke-width="1.1"/></svg>
<div style="left:280px;top:570px;width:1px;height:23px;background:#d8d8d8;"></div>
<svg style="left:291.2px;top:576.5px;" width="11" height="11" viewBox="0 0 11 11"><path d="M1 1 L10 10 M10 1 L1 10" fill="none" stroke="#333" stroke-width="1.2"/></svg>
<div style="left:1px;top:599px;width:298px;height:399px;overflow:hidden;">
<svg style="left:6px;top:3px;" width="16" height="16" viewBox="0 0 16 16"><defs><linearGradient id="stg" x1="0" y1="0" x2="0" y2="1"><stop offset="0" stop-color="#f8e27a"/><stop offset="1" stop-color="#e8b93a"/></linearGradient></defs><path d="M8 0.8 L10.2 5.6 L15.4 6.2 L11.5 9.7 L12.6 15 L8 12.3 L3.4 15 L4.5 9.7 L0.6 6.2 L5.8 5.6 Z" fill="url(#stg)" stroke="#a89a6a" stroke-width="0.8" stroke-linejoin="round"/></svg>
<span class="t" style="left:27.40px;top:2.50px;font-size:12px;line-height:18px;color:#1e1e1e;letter-spacing:-0.151px;">Favorites</span>
<svg style="left:18px;top:27.8px;" width="16" height="16" viewBox="0 0 16 16"><path d="M0.5 1.5 L5 0.8 L7.5 1.6 V13 L5 12.4 L0.5 13 Z" fill="#fbfbfb" stroke="#b9b9b9" stroke-width="0.8"/><path d="M7.5 1.6 L10 0.8 L14.5 1.5 V13 L10 12.4 L7.5 13 Z" fill="#fbfbfb" stroke="#b9b9b9" stroke-width="0.8"/><path d="M2 3 Q4 2.2 6 3" stroke="#2f9fe0" stroke-width="0.9" fill="none"/><path d="M2 5.2 Q4 4.4 6 5.2" stroke="#2f9fe0" stroke-width="0.9" fill="none"/><path d="M2 7.4 Q4 6.6000000000000005 6 7.4" stroke="#2f9fe0" stroke-width="0.9" fill="none"/><path d="M2 9.6 Q4 8.799999999999999 6 9.6" stroke="#2f9fe0" stroke-width="0.9" fill="none"/><path d="M2 11.6 Q4 10.799999999999999 6 11.6" stroke="#2f9fe0" stroke-width="0.9" fill="none"/><rect x="9.6" y="2.4" width="3.6" height="4.2" fill="#8fd0f4"/><path d="M7.8 15 Q7.8 11.4 11.2 11.4 Q15.2 11.4 15.6 15 Z" fill="#3a78d0"/><circle cx="11.6" cy="9" r="2.5" fill="#ffd21f"/><path d="M9 8.2 Q9.4 5.8 11.8 5.8 Q14.2 5.8 14.4 8.2 Q11.6 7 9 8.2 Z" fill="#111"/></svg>
<span class="t" style="left:39.30px;top:26.50px;font-size:12px;line-height:18px;color:#1e1e1e;letter-spacing:-0.200px;">Device Templates</span>
<svg style="left:18px;top:51.8px;" width="16" height="16" viewBox="0 0 16 16"><path d="M0.5 1.5 L5 0.8 L7.5 1.6 V13 L5 12.4 L0.5 13 Z" fill="#fbfbfb" stroke="#b9b9b9" stroke-width="0.8"/><path d="M7.5 1.6 L10 0.8 L14.5 1.5 V13 L10 12.4 L7.5 13 Z" fill="#fbfbfb" stroke="#b9b9b9" stroke-width="0.8"/><path d="M2 3 Q4 2.2 6 3" stroke="#2f9fe0" stroke-width="0.9" fill="none"/><path d="M2 5.2 Q4 4.4 6 5.2" stroke="#2f9fe0" stroke-width="0.9" fill="none"/><path d="M2 7.4 Q4 6.6000000000000005 6 7.4" stroke="#2f9fe0" stroke-width="0.9" fill="none"/><path d="M2 9.6 Q4 8.799999999999999 6 9.6" stroke="#2f9fe0" stroke-width="0.9" fill="none"/><path d="M2 11.6 Q4 10.799999999999999 6 11.6" stroke="#2f9fe0" stroke-width="0.9" fill="none"/><rect x="9.6" y="2.4" width="3.6" height="4.2" fill="#8fd0f4"/><circle cx="10.6" cy="10.6" r="3.9" fill="#fdf4e6" stroke="#8a5a2a" stroke-width="1.1"/><path d="M10.9 8.3 V10.9 L9.6 11.8" stroke="#444" stroke-width="0.8" fill="none"/></svg>
<span class="t" style="left:39.30px;top:50.50px;font-size:12px;line-height:18px;color:#1e1e1e;letter-spacing:-0.228px;">Previously used</span>
<svg style="left:18px;top:75.8px;" width="16" height="16" viewBox="0 0 16 16"><path d="M0.5 1.5 L5 0.8 L7.5 1.6 V13 L5 12.4 L0.5 13 Z" fill="#fbfbfb" stroke="#b9b9b9" stroke-width="0.8"/><path d="M7.5 1.6 L10 0.8 L14.5 1.5 V13 L10 12.4 L7.5 13 Z" fill="#fbfbfb" stroke="#b9b9b9" stroke-width="0.8"/><path d="M2 3 Q4 2.2 6 3" stroke="#2f9fe0" stroke-width="0.9" fill="none"/><path d="M2 5.2 Q4 4.4 6 5.2" stroke="#2f9fe0" stroke-width="0.9" fill="none"/><path d="M2 7.4 Q4 6.6000000000000005 6 7.4" stroke="#2f9fe0" stroke-width="0.9" fill="none"/><path d="M2 9.6 Q4 8.799999999999999 6 9.6" stroke="#2f9fe0" stroke-width="0.9" fill="none"/><path d="M2 11.6 Q4 10.799999999999999 6 11.6" stroke="#2f9fe0" stroke-width="0.9" fill="none"/><rect x="9.6" y="2.4" width="3.6" height="4.2" fill="#8fd0f4"/><circle cx="10.6" cy="10.6" r="3.9" fill="#fdf4e6" stroke="#8a5a2a" stroke-width="1.1"/><path d="M10.9 8.3 V10.9 L9.6 11.8" stroke="#444" stroke-width="0.8" fill="none"/></svg>
<span class="t" style="left:39.30px;top:74.50px;font-size:12px;line-height:18px;color:#1e1e1e;letter-spacing:-0.004px;">Previously imported</span>
<div style="left:0px;top:95px;width:298px;height:24px;background:#ebebeb;"></div>
<svg style="left:6px;top:99px;" width="16" height="16" viewBox="0 0 16 16"><rect x="0.5" y="0.5" width="15" height="15" fill="#fbfcfd" stroke="#8392a6"/><rect x="0" y="0" width="16" height="3" fill="#46566c"/><rect x="4.4" y="1" width="4.4" height="1" fill="#76869a"/><rect x="1" y="1" width="3" height="1" fill="#fff"/><rect x="10" y="1" width="1.2" height="1" fill="#fff"/><rect x="12" y="1" width="1.2" height="1" fill="#fff"/><rect x="14" y="1" width="1.2" height="1" fill="#e02a1f"/><rect x="3" y="5" width="1.1" height="1" fill="#111"/><rect x="5" y="5" width="8" height="1" fill="#1a1a1a"/><rect x="3" y="7" width="1.1" height="1" fill="#111"/><rect x="5" y="7" width="8" height="1" fill="#1a1a1a"/><rect x="5" y="9" width="1.1" height="1" fill="#111"/><rect x="7" y="9" width="6" height="1" fill="#1a1a1a"/><rect x="5" y="11" width="1.1" height="1" fill="#111"/><rect x="7" y="11" width="6" height="1" fill="#1a1a1a"/><rect x="3" y="13" width="1.1" height="1" fill="#111"/><rect x="5" y="13" width="8" height="1" fill="#1a1a1a"/></svg>
<span class="t" style="left:27.40px;top:98.50px;font-size:12px;line-height:18px;color:#1e1e1e;letter-spacing:0.138px;">Manufacturers</span>
<svg style="left:4.2px;top:125.5px;" width="7" height="11" viewBox="0 0 7 11"><path d="M1 1 L5.7 5.5 L1 10" fill="none" stroke="#b2b2b2" stroke-width="1.0"/></svg>
<span class="t" style="left:19.00px;top:124.20px;font-size:8px;line-height:14px;color:#ff1a2a;letter-spacing:-1.181px;font-weight:700;-webkit-text-stroke:0.45px #ff1a2a;">ABB</span>
<span class="t" style="left:39.30px;top:122.50px;font-size:12px;line-height:18px;color:#1e1e1e;letter-spacing:-1.072px;">ABB</span>
<svg style="left:4.2px;top:149.5px;" width="7" height="11" viewBox="0 0 7 11"><path d="M1 1 L5.7 5.5 L1 10" fill="none" stroke="#b2b2b2" stroke-width="1.0"/></svg>
<svg style="left:18px;top:147.0px;" width="16" height="16" viewBox="0 0 16 16"><rect x="0.5" y="0.5" width="15" height="15" fill="#fbfcfd" stroke="#8392a6"/><rect x="0" y="0" width="16" height="3" fill="#46566c"/><rect x="4.4" y="1" width="4.4" height="1" fill="#76869a"/><rect x="1" y="1" width="3" height="1" fill="#fff"/><rect x="10" y="1" width="1.2" height="1" fill="#fff"/><rect x="12" y="1" width="1.2" height="1" fill="#fff"/><rect x="14" y="1" width="1.2" height="1" fill="#e02a1f"/><rect x="3" y="5" width="1.1" height="1" fill="#111"/><rect x="5" y="5" width="8" height="1" fill="#1a1a1a"/><rect x="3" y="7" width="1.1" height="1" fill="#111"/><rect x="5" y="7" width="8" height="1" fill="#1a1a1a"/><rect x="5" y="9" width="1.1" height="1" fill="#111"/><rect x="7" y="9" width="6" height="1" fill="#1a1a1a"/><rect x="5" y="11" width="1.1" height="1" fill="#111"/><rect x="7" y="11" width="6" height="1" fill="#1a1a1a"/><rect x="3" y="13" width="1.1" height="1" fill="#111"/><rect x="5" y="13" width="8" height="1" fill="#1a1a1a"/></svg>
<span class="t" style="left:39.30px;top:146.50px;font-size:12px;line-height:18px;color:#1e1e1e;letter-spacing:-0.588px;">AIRZONE – ALTRA</span>
<svg style="left:4.2px;top:173.5px;" width="7" height="11" viewBox="0 0 7 11"><path d="M1 1 L5.7 5.5 L1 10" fill="none" stroke="#b2b2b2" stroke-width="1.0"/></svg>
<svg style="left:18px;top:171.0px;" width="16" height="16" viewBox="0 0 16 16"><path d="M1 1 H13 Q15 1 15 3 V13 Q15 15 13 15 H3 Q1 15 1 13 V9.6" fill="none" stroke="#222" stroke-width="1.4"/><path d="M1 4.4 H11 V9.4 Q11 11.6 8.6 11.6 H6.4 Q4 11.6 4 9.6" fill="none" stroke="#222" stroke-width="1.4"/></svg>
<span class="t" style="left:39.30px;top:170.50px;font-size:12px;line-height:18px;color:#1e1e1e;letter-spacing:-0.107px;">Albrecht Jung</span>
<svg style="left:4.2px;top:197.5px;" width="7" height="11" viewBox="0 0 7 11"><path d="M1 1 L5.7 5.5 L1 10" fill="none" stroke="#b2b2b2" stroke-width="1.0"/></svg>
<span class="t" style="left:17.80px;top:190.05px;font-size:21.5px;line-height:27.5px;color:#1a5fb0;letter-spacing:1.469px;font-weight:700;-webkit-text-stroke:0.4px #1a5fb0;font-style:italic;">A</span>
<span class="t" style="left:39.30px;top:194.50px;font-size:12px;line-height:18px;color:#1e1e1e;letter-spacing:-0.663px;">APRICUM</span>
<svg style="left:4.2px;top:221.5px;" width="7" height="11" viewBox="0 0 7 11"><path d="M1 1 L5.7 5.5 L1 10" fill="none" stroke="#b2b2b2" stroke-width="1.0"/></svg>
<svg style="left:18px;top:219.0px;" width="16" height="16" viewBox="0 0 16 16"><rect x="0.5" y="0.5" width="15" height="15" fill="#fbfcfd" stroke="#8392a6"/><rect x="0" y="0" width="16" height="3" fill="#46566c"/><rect x="4.4" y="1" width="4.4" height="1" fill="#76869a"/><rect x="1" y="1" width="3" height="1" fill="#fff"/><rect x="10" y="1" width="1.2" height="1" fill="#fff"/><rect x="12" y="1" width="1.2" height="1" fill="#fff"/><rect x="14" y="1" width="1.2" height="1" fill="#e02a1f"/><rect x="3" y="5" width="1.1" height="1" fill="#111"/><rect x="5" y="5" width="8" height="1" fill="#1a1a1a"/><rect x="3" y="7" width="1.1" height="1" fill="#111"/><rect x="5" y="7" width="8" height="1" fill="#1a1a1a"/><rect x="5" y="9" width="1.1" height="1" fill="#111"/><rect x="7" y="9" width="6" height="1" fill="#1a1a1a"/><rect x="5" y="11" width="1.1" height="1" fill="#111"/><rect x="7" y="11" width="6" height="1" fill="#1a1a1a"/><rect x="3" y="13" width="1.1" height="1" fill="#111"/><rect x="5" y="13" width="8" height="1" fill="#1a1a1a"/></svg>
<span class="t" style="left:39.30px;top:218.50px;font-size:12px;line-height:18px;color:#1e1e1e;letter-spacing:-0.531px;">ARBONIA</span>
<svg style="left:4.2px;top:245.5px;" width="7" height="11" viewBox="0 0 7 11"><path d="M1 1 L5.7 5.5 L1 10" fill="none" stroke="#b2b2b2" stroke-width="1.0"/></svg>
<svg style="left:18px;top:243.0px;" width="16" height="16" viewBox="0 0 16 16"><rect x="0.5" y="0.5" width="15" height="15" fill="#fbfcfd" stroke="#8392a6"/><rect x="0" y="0" width="16" height="3" fill="#46566c"/><rect x="4.4" y="1" width="4.4" height="1" fill="#76869a"/><rect x="1" y="1" width="3" height="1" fill="#fff"/><rect x="10" y="1" width="1.2" height="1" fill="#fff"/><rect x="12" y="1" width="1.2" height="1" fill="#fff"/><rect x="14" y="1" width="1.2" height="1" fill="#e02a1f"/><rect x="3" y="5" width="1.1" height="1" fill="#111"/><rect x="5" y="5" width="8" height="1" fill="#1a1a1a"/><rect x="3" y="7" width="1.1" height="1" fill="#111"/><rect x="5" y="7" width="8" height="1" fill="#1a1a1a"/><rect x="5" y="9" width="1.1" height="1" fill="#111"/><rect x="7" y="9" width="6" height="1" fill="#1a1a1a"/><rect x="5" y="11" width="1.1" height="1" fill="#111"/><rect x="7" y="11" width="6" height="1" fill="#1a1a1a"/><rect x="3" y="13" width="1.1" height="1" fill="#111"/><rect x="5" y="13" width="8" height="1" fill="#1a1a1a"/></svg>
<span class="t" style="left:39.30px;top:242.50px;font-size:12px;line-height:18px;color:#1e1e1e;letter-spacing:0.057px;">Atouch</span>
<svg style="left:4.2px;top:269.5px;" width="7" height="11" viewBox="0 0 7 11"><path d="M1 1 L5.7 5.5 L1 10" fill="none" stroke="#b2b2b2" stroke-width="1.0"/></svg>
<svg style="left:18px;top:267.0px;" width="16" height="16" viewBox="0 0 16 16"><rect x="0.5" y="0.5" width="15" height="15" fill="#fbfcfd" stroke="#8392a6"/><rect x="0" y="0" width="16" height="3" fill="#46566c"/><rect x="4.4" y="1" width="4.4" height="1" fill="#76869a"/><rect x="1" y="1" width="3" height="1" fill="#fff"/><rect x="10" y="1" width="1.2" height="1" fill="#fff"/><rect x="12" y="1" width="1.2" height="1" fill="#fff"/><rect x="14" y="1" width="1.2" height="1" fill="#e02a1f"/><rect x="3" y="5" width="1.1" height="1" fill="#111"/><rect x="5" y="5" width="8" height="1" fill="#1a1a1a"/><rect x="3" y="7" width="1.1" height="1" fill="#111"/><rect x="5" y="7" width="8" height="1" fill="#1a1a1a"/><rect x="5" y="9" width="1.1" height="1" fill="#111"/><rect x="7" y="9" width="6" height="1" fill="#1a1a1a"/><rect x="5" y="11" width="1.1" height="1" fill="#111"/><rect x="7" y="11" width="6" height="1" fill="#1a1a1a"/><rect x="3" y="13" width="1.1" height="1" fill="#111"/><rect x="5" y="13" width="8" height="1" fill="#1a1a1a"/></svg>
<span class="t" style="left:39.30px;top:266.50px;font-size:12px;line-height:18px;color:#1e1e1e;letter-spacing:-0.452px;">AUTOMATISMI BENINCA S.P.A.</span>
<svg style="left:4.2px;top:293.5px;" width="7" height="11" viewBox="0 0 7 11"><path d="M1 1 L5.7 5.5 L1 10" fill="none" stroke="#b2b2b2" stroke-width="1.0"/></svg>
<svg style="left:18px;top:291.0px;" width="16" height="16" viewBox="0 0 16 16"><rect x="0.5" y="0.5" width="15" height="15" fill="#fbfcfd" stroke="#8392a6"/><rect x="0" y="0" width="16" height="3" fill="#46566c"/><rect x="4.4" y="1" width="4.4" height="1" fill="#76869a"/><rect x="1" y="1" width="3" height="1" fill="#fff"/><rect x="10" y="1" width="1.2" height="1" fill="#fff"/><rect x="12" y="1" width="1.2" height="1" fill="#fff"/><rect x="14" y="1" width="1.2" height="1" fill="#e02a1f"/><rect x="3" y="5" width="1.1" height="1" fill="#111"/><rect x="5" y="5" width="8" height="1" fill="#1a1a1a"/><rect x="3" y="7" width="1.1" height="1" fill="#111"/><rect x="5" y="7" width="8" height="1" fill="#1a1a1a"/><rect x="5" y="9" width="1.1" height="1" fill="#111"/><rect x="7" y="9" width="6" height="1" fill="#1a1a1a"/><rect x="5" y="11" width="1.1" height="1" fill="#111"/><rect x="7" y="11" width="6" height="1" fill="#1a1a1a"/><rect x="3" y="13" width="1.1" height="1" fill="#111"/><rect x="5" y="13" width="8" height="1" fill="#1a1a1a"/></svg>
<span class="t" style="left:39.30px;top:290.50px;font-size:12px;line-height:18px;color:#1e1e1e;letter-spacing:-0.478px;">Ave S.p.A.</span>
<svg style="left:4.2px;top:317.5px;" width="7" height="11" viewBox="0 0 7 11"><path d="M1 1 L5.7 5.5 L1 10" fill="none" stroke="#b2b2b2" stroke-width="1.0"/></svg>
<svg style="left:18px;top:315.0px;" width="16" height="16" viewBox="0 0 16 16"><rect x="0.5" y="0.5" width="15" height="15" fill="#fbfcfd" stroke="#8392a6"/><rect x="0" y="0" width="16" height="3" fill="#46566c"/><rect x="4.4" y="1" width="4.4" height="1" fill="#76869a"/><rect x="1" y="1" width="3" height="1" fill="#fff"/><rect x="10" y="1" width="1.2" height="1" fill="#fff"/><rect x="12" y="1" width="1.2" height="1" fill="#fff"/><rect x="14" y="1" width="1.2" height="1" fill="#e02a1f"/><rect x="3" y="5" width="1.1" height="1" fill="#111"/><rect x="5" y="5" width="8" height="1" fill="#1a1a1a"/><rect x="3" y="7" width="1.1" height="1" fill="#111"/><rect x="5" y="7" width="8" height="1" fill="#1a1a1a"/><rect x="5" y="9" width="1.1" height="1" fill="#111"/><rect x="7" y="9" width="6" height="1" fill="#1a1a1a"/><rect x="5" y="11" width="1.1" height="1" fill="#111"/><rect x="7" y="11" width="6" height="1" fill="#1a1a1a"/><rect x="3" y="13" width="1.1" height="1" fill="#111"/><rect x="5" y="13" width="8" height="1" fill="#1a1a1a"/></svg>
<span class="t" style="left:39.30px;top:314.50px;font-size:12px;line-height:18px;color:#1e1e1e;letter-spacing:-1.063px;">BASALTE</span>
<svg style="left:4.2px;top:341.5px;" width="7" height="11" viewBox="0 0 7 11"><path d="M1 1 L5.7 5.5 L1 10" fill="none" stroke="#b2b2b2" stroke-width="1.0"/></svg>
<svg style="left:18px;top:339.0px;" width="16" height="16" viewBox="0 0 16 16"><rect x="0.5" y="0.5" width="15" height="15" fill="#fbfcfd" stroke="#8392a6"/><rect x="0" y="0" width="16" height="3" fill="#46566c"/><rect x="4.4" y="1" width="4.4" height="1" fill="#76869a"/><rect x="1" y="1" width="3" height="1" fill="#fff"/><rect x="10" y="1" width="1.2" height="1" fill="#fff"/><rect x="12" y="1" width="1.2" height="1" fill="#fff"/><rect x="14" y="1" width="1.2" height="1" fill="#e02a1f"/><rect x="3" y="5" width="1.1" height="1" fill="#111"/><rect x="5" y="5" width="8" height="1" fill="#1a1a1a"/><rect x="3" y="7" width="1.1" height="1" fill="#111"/><rect x="5" y="7" width="8" height="1" fill="#1a1a1a"/><rect x="5" y="9" width="1.1" height="1" fill="#111"/><rect x="7" y="9" width="6" height="1" fill="#1a1a1a"/><rect x="5" y="11" width="1.1" height="1" fill="#111"/><rect x="7" y="11" width="6" height="1" fill="#1a1a1a"/><rect x="3" y="13" width="1.1" height="1" fill="#111"/><rect x="5" y="13" width="8" height="1" fill="#1a1a1a"/></svg>
<span class="t" style="left:39.30px;top:338.50px;font-size:12px;line-height:18px;color:#1e1e1e;letter-spacing:-0.087px;">Becker-Antriebe GmbH</span>
<svg style="left:4.2px;top:365.5px;" width="7" height="11" viewBox="0 0 7 11"><path d="M1 1 L5.7 5.5 L1 10" fill="none" stroke="#b2b2b2" stroke-width="1.0"/></svg>
<span class="t" style="left:18.00px;top:359.60px;font-size:18px;line-height:24px;color:#0f66a8;letter-spacing:-0.400px;font-weight:700;-webkit-text-stroke:0.8px #0f66a8;">B</span>
<div style="left:31.6px;top:374.1px;width:3.4px;height:3.4px;background:#0f66a8;"></div>
<span class="t" style="left:39.30px;top:362.50px;font-size:12px;line-height:18px;color:#1e1e1e;letter-spacing:-0.274px;">Berker</span>
<svg style="left:4.2px;top:389.5px;" width="7" height="11" viewBox="0 0 7 11"><path d="M1 1 L5.7 5.5 L1 10" fill="none" stroke="#b2b2b2" stroke-width="1.0"/></svg>
<svg style="left:18px;top:386.5px;" width="16" height="16" viewBox="0 0 16 16"><path d="M6.2 2.6 L8.4 0.6 L10.6 2.6 L8.4 4.6 Z" fill="#fff" stroke="#f08a1c" stroke-width="1.1"/><path d="M1.6 6.4 L4.6 4 M11.6 3.6 L14.4 6.6 M1.8 6.6 Q5 11.4 11 9.4 L12.6 7.4 L13.8 10.6" fill="none" stroke="#222" stroke-width="1.1"/></svg>
<span class="t" style="left:39.30px;top:386.50px;font-size:12px;line-height:18px;color:#1e1e1e;letter-spacing:-0.221px;">Bes – Ingenium</span>
</div>
<div style="left:299px;top:598px;width:1px;height:400px;background:#ececec;"></div>
<div style="left:300px;top:598px;width:13px;height:400px;background:#fff;"></div>
<div style="left:300px;top:614px;width:13px;height:68px;background:#e6e6e6;"></div>
<svg style="left:302px;top:602px;" width="8" height="7" viewBox="0 0 8 7"><path d="M0.8 5.4 L4 2 L7.2 5.4" fill="none" stroke="#222" stroke-width="1.7"/></svg>
<svg style="left:302px;top:986px;" width="8" height="7" viewBox="0 0 8 7"><path d="M0.8 1.6 L4 5 L7.2 1.6" fill="none" stroke="#222" stroke-width="1.7"/></svg>
<div style="left:315px;top:566px;width:1253px;height:31px;background:#f5f5f5;"></div>
<svg style="left:329px;top:574px;" width="17" height="16" viewBox="0 0 17 16"><path d="M5 0.6 H0.7 V15.4 H5" fill="none" stroke="#2f7fc4" stroke-width="1.2"/><path d="M3.6 8 L9 2.4 V6 H16 V10 H9 V13.6 Z" fill="#55a7cf" stroke="#3a8fc0" stroke-width="0.6"/></svg>
<span class="t" style="left:350.50px;top:573.50px;font-size:12px;line-height:18px;color:#333;letter-spacing:0.081px;">Import</span>
<div style="left:406px;top:570px;width:1px;height:24px;background:#dadada;"></div>
<svg style="left:421px;top:574px;" width="17" height="16" viewBox="0 0 17 16"><path d="M4.4 10.6 Q0.8 10.6 0.8 7.6 Q0.8 5 3.6 4.8 Q4.2 1 8 1 Q11.4 1 12.2 4.2 Q15.6 4.4 15.6 7.6 Q15.6 10.6 12.4 10.6" fill="none" stroke="#bdbdbd" stroke-width="1.1"/><path d="M7 6 H10 V10.6 H12.4 L8.5 15 L4.6 10.6 H7 Z" fill="#b4b4b4"/></svg>
<span class="t" style="left:442.60px;top:573.50px;font-size:12px;line-height:18px;color:#b0b0b0;letter-spacing:-0.247px;">Download</span>
<div style="left:1373px;top:570px;width:168px;height:24px;background:#ffffb8;border:1px solid #e2e2c0;box-sizing:border-box;"></div>
<div style="left:1540px;top:570px;width:25px;height:24px;background:#fff;border:1px solid #d6d6d6;box-sizing:border-box;"></div>
<svg style="left:1382.5px;top:574.5px;" width="15" height="15" viewBox="0 0 15 15"><circle cx="9.5" cy="5.5" r="4.9" fill="none" stroke="#333" stroke-width="1.2"/><path d="M6 9 L0.6 14.4" stroke="#333" stroke-width="1.4"/></svg>
<span class="t" style="left:1408.30px;top:574.00px;font-size:12px;line-height:18px;color:#222;letter-spacing:-0.272px;">satel</span>
<svg style="left:1520.5px;top:576.7px;" width="10.6" height="10.6" viewBox="0 0 10.6 10.6"><path d="M1 1 L9.6 9.6 M9.6 1 L1 9.6" fill="none" stroke="#222" stroke-width="1.2"/></svg>
<svg style="left:1546.5px;top:578.5px;" width="11" height="7" viewBox="0 0 11 7"><path d="M1 1 L5.5 5.7 L10 1" fill="none" stroke="#3468c0" stroke-width="1.15"/></svg>
<div style="left:315px;top:598px;width:1253px;height:23px;background:#f5f5f5;"></div>
<div style="left:315px;top:598px;width:1128px;height:23px;background:#ffffbe;"></div>
<div style="left:315px;top:597px;width:1253px;height:1px;background:#dedede;"></div>
<div style="left:315px;top:621px;width:1253px;height:1px;background:#d6d6d6;"></div>
<div style="left:356px;top:598px;width:1px;height:23px;background:#e6e6c4;"></div>
<div style="left:377px;top:598px;width:1px;height:23px;background:#e6e6c4;"></div>
<div style="left:588px;top:598px;width:1px;height:23px;background:#e6e6c4;"></div>
<div style="left:813px;top:598px;width:1px;height:23px;background:#e6e6c4;"></div>
<div style="left:930px;top:598px;width:1px;height:23px;background:#e6e6c4;"></div>
<div style="left:1023px;top:598px;width:1px;height:23px;background:#e6e6c4;"></div>
<div style="left:1362px;top:598px;width:1px;height:23px;background:#e6e6c4;"></div>
<div style="left:1442px;top:598px;width:1px;height:23px;background:#e6e6c4;"></div>
<svg style="left:320px;top:605px;" width="11" height="10" viewBox="0 0 11 10"><circle cx="7.2" cy="3.6" r="3" fill="#f4f4f4" stroke="#bdbdbd" stroke-width="0.9"/><path d="M4.8 5.8 L0.8 9.4" stroke="#9a9a9a" stroke-width="1.3"/></svg>
<div style="left:362px;top:602px;width:15px;height:18px;overflow:hidden;">
<span class="t" style="left:0.00px;top:0.00px;font-size:12px;line-height:18px;color:#111;letter-spacing:-0.763px;-webkit-text-stroke:0.35px #111;">Sec</span>
</div>
<span class="t" style="left:383.30px;top:602.00px;font-size:12px;line-height:18px;color:#111;letter-spacing:0.225px;-webkit-text-stroke:0.35px #111;">Manufacturer</span>
<svg style="left:462px;top:606px;" width="7" height="4" viewBox="0 0 7 4"><path d="M0.2 3.8 L3.2 0.2 L6.2 3.8 Z" fill="#222"/></svg>
<span class="t" style="left:594.30px;top:602.00px;font-size:12px;line-height:18px;color:#111;letter-spacing:-0.004px;-webkit-text-stroke:0.35px #111;">Name</span>
<span class="t" style="left:819.30px;top:602.00px;font-size:12px;line-height:18px;color:#111;letter-spacing:0.193px;-webkit-text-stroke:0.35px #111;">Order Number</span>
<span class="t" style="left:936.00px;top:602.00px;font-size:12px;line-height:18px;color:#111;letter-spacing:0.199px;-webkit-text-stroke:0.35px #111;">Medium Type</span>
<span class="t" style="left:1029.30px;top:602.00px;font-size:12px;line-height:18px;color:#111;letter-spacing:0.298px;-webkit-text-stroke:0.35px #111;">Application</span>
<span class="t" style="left:1367.70px;top:602.00px;font-size:12px;line-height:18px;color:#111;letter-spacing:0.081px;-webkit-text-stroke:0.35px #111;">Version</span>
<svg style="left:316.5px;top:624px;" width="20" height="20" viewBox="0 0 20 20"><circle cx="10" cy="9.6" r="8.9" fill="none" stroke="#222" stroke-width="1.1"/><path d="M6.6 11.4 L10 8 L13.4 11.4" fill="none" stroke="#222" stroke-width="1.8"/></svg>
<span class="t" style="left:340.30px;top:626.00px;font-size:12px;line-height:18px;color:#111;letter-spacing:-0.168px;-webkit-text-stroke:0.35px #111;">Satel sp. z o.o.</span>
<svg style="left:340px;top:648px;" width="16" height="12" viewBox="0 0 16 12"><rect x="2.5" y="0.5" width="12" height="11" fill="#cfcfcf" stroke="#808080" stroke-width="1"/><rect x="2" y="0" width="2.8" height="12" fill="#7c7c7c"/><rect x="0" y="5" width="2.2" height="2" fill="#7c7c7c"/></svg>
<div style="left:379px;top:646px;width:26px;height:16px;background:#ffff00;"></div>
<span class="t" style="left:379.60px;top:645.50px;font-size:12px;line-height:18px;color:#111;letter-spacing:-0.592px;">Satel</span>
<span class="t" style="left:407.60px;top:645.50px;font-size:12px;line-height:18px;color:#111;letter-spacing:-0.290px;">sp. z o.o.</span>
<span class="t" style="left:590.00px;top:645.50px;font-size:12px;line-height:18px;color:#222;letter-spacing:-0.249px;">KNX-DIM21.230.300.1</span>
<span class="t" style="left:815.00px;top:645.50px;font-size:12px;line-height:18px;color:#222;letter-spacing:-0.191px;">KNX-DIM21</span>
<span class="t" style="left:932.30px;top:645.50px;font-size:12px;line-height:18px;color:#222;letter-spacing:-1.322px;">TP</span>
<span class="t" style="left:1025.00px;top:645.50px;font-size:12px;line-height:18px;color:#222;letter-spacing:-0.036px;">Universal Dimming Actuator 2CH</span>
<span class="t" style="left:1364.00px;top:645.50px;font-size:12px;line-height:18px;color:#222;letter-spacing:-0.562px;">1.3</span>
<div style="left:316px;top:664px;width:1252px;height:20px;background:#fafafa;"></div>
<svg style="left:340px;top:668px;" width="16" height="12" viewBox="0 0 16 12"><rect x="2.5" y="0.5" width="12" height="11" fill="#cfcfcf" stroke="#808080" stroke-width="1"/><rect x="2" y="0" width="2.8" height="12" fill="#7c7c7c"/><rect x="0" y="5" width="2.2" height="2" fill="#7c7c7c"/></svg>
<div style="left:379px;top:666px;width:26px;height:16px;background:#ffff00;"></div>
<span class="t" style="left:379.60px;top:665.50px;font-size:12px;line-height:18px;color:#111;letter-spacing:-0.592px;">Satel</span>
<span class="t" style="left:407.60px;top:665.50px;font-size:12px;line-height:18px;color:#111;letter-spacing:-0.290px;">sp. z o.o.</span>
<span class="t" style="left:590.00px;top:665.50px;font-size:12px;line-height:18px;color:#222;letter-spacing:-0.434px;">KNX-SA24.230.16.1</span>
<span class="t" style="left:815.00px;top:665.50px;font-size:12px;line-height:18px;color:#222;letter-spacing:-0.466px;">KNX-SA24</span>
<span class="t" style="left:932.30px;top:665.50px;font-size:12px;line-height:18px;color:#222;letter-spacing:-1.322px;">TP</span>
<span class="t" style="left:1025.00px;top:665.50px;font-size:12px;line-height:18px;color:#222;letter-spacing:-0.142px;">Universal Switch Actuator 8CH</span>
<span class="t" style="left:1364.00px;top:665.50px;font-size:12px;line-height:18px;color:#222;letter-spacing:-0.562px;">1.3</span>
<svg style="left:340px;top:688px;" width="16" height="12" viewBox="0 0 16 12"><rect x="2.5" y="0.5" width="12" height="11" fill="#cfcfcf" stroke="#808080" stroke-width="1"/><rect x="2" y="0" width="2.8" height="12" fill="#7c7c7c"/><rect x="0" y="5" width="2.2" height="2" fill="#7c7c7c"/></svg>
<div style="left:379px;top:686px;width:26px;height:16px;background:#ffff00;"></div>
<span class="t" style="left:379.60px;top:685.50px;font-size:12px;line-height:18px;color:#111;letter-spacing:-0.592px;">Satel</span>
<span class="t" style="left:407.60px;top:685.50px;font-size:12px;line-height:18px;color:#111;letter-spacing:-0.290px;">sp. z o.o.</span>
<span class="t" style="left:590.00px;top:685.50px;font-size:12px;line-height:18px;color:#222;letter-spacing:-0.434px;">KNX-SA41.230.16.1</span>
<span class="t" style="left:815.00px;top:685.50px;font-size:12px;line-height:18px;color:#222;letter-spacing:-0.466px;">KNX-SA41</span>
<span class="t" style="left:932.30px;top:685.50px;font-size:12px;line-height:18px;color:#222;letter-spacing:-1.322px;">TP</span>
<span class="t" style="left:1025.00px;top:685.50px;font-size:12px;line-height:18px;color:#222;letter-spacing:-0.142px;">Universal Switch Actuator 4CH</span>
<span class="t" style="left:1364.00px;top:685.50px;font-size:12px;line-height:18px;color:#222;letter-spacing:-0.562px;">1.3</span>
<div style="left:316px;top:704px;width:1252px;height:20px;background:#e9e9e9;"></div>
<svg style="left:340px;top:708px;" width="16" height="12" viewBox="0 0 16 12"><rect x="2.5" y="0.5" width="12" height="11" fill="#cfcfcf" stroke="#808080" stroke-width="1"/><rect x="2" y="0" width="2.8" height="12" fill="#7c7c7c"/><rect x="0" y="5" width="2.2" height="2" fill="#7c7c7c"/></svg>
<div style="left:379px;top:706px;width:26px;height:16px;background:#ffff00;"></div>
<span class="t" style="left:379.60px;top:705.50px;font-size:12px;line-height:18px;color:#111;letter-spacing:-0.592px;">Satel</span>
<span class="t" style="left:407.60px;top:705.50px;font-size:12px;line-height:18px;color:#111;letter-spacing:-0.290px;">sp. z o.o.</span>
<span class="t" style="left:590.00px;top:705.50px;font-size:12px;line-height:18px;color:#222;letter-spacing:-0.358px;">KNX-BIN24.30.1</span>
<span class="t" style="left:815.00px;top:705.50px;font-size:12px;line-height:18px;color:#222;letter-spacing:-0.303px;">KNX-BIN24</span>
<span class="t" style="left:932.30px;top:705.50px;font-size:12px;line-height:18px;color:#222;letter-spacing:-1.322px;">TP</span>
<span class="t" style="left:1025.00px;top:705.50px;font-size:12px;line-height:18px;color:#222;letter-spacing:-0.171px;">Universal Binary Input 8CH</span>
<span class="t" style="left:1364.00px;top:705.50px;font-size:12px;line-height:18px;color:#222;letter-spacing:-0.562px;">1.4</span>
<svg style="left:340px;top:728px;" width="16" height="12" viewBox="0 0 16 12"><rect x="2.5" y="0.5" width="12" height="11" fill="#cfcfcf" stroke="#808080" stroke-width="1"/><rect x="2" y="0" width="2.8" height="12" fill="#7c7c7c"/><rect x="0" y="5" width="2.2" height="2" fill="#7c7c7c"/></svg>
<div style="left:379px;top:726px;width:26px;height:16px;background:#ffff00;"></div>
<span class="t" style="left:379.60px;top:725.50px;font-size:12px;line-height:18px;color:#111;letter-spacing:-0.592px;">Satel</span>
<span class="t" style="left:407.60px;top:725.50px;font-size:12px;line-height:18px;color:#111;letter-spacing:-0.290px;">sp. z o.o.</span>
<span class="t" style="left:590.00px;top:725.50px;font-size:12px;line-height:18px;color:#222;letter-spacing:-0.502px;">KNX-BSA12.24.6.1</span>
<span class="t" style="left:815.00px;top:725.50px;font-size:12px;line-height:18px;color:#222;letter-spacing:-0.570px;">KNX-BSA12L</span>
<span class="t" style="left:932.30px;top:725.50px;font-size:12px;line-height:18px;color:#222;letter-spacing:-1.322px;">TP</span>
<span class="t" style="left:1025.00px;top:725.50px;font-size:12px;line-height:18px;color:#222;letter-spacing:-0.053px;">Universal two-channel blind actuator (24 V DC)</span>
<span class="t" style="left:1364.00px;top:725.50px;font-size:12px;line-height:18px;color:#222;letter-spacing:-0.562px;">1.2</span>
<div style="left:316px;top:744px;width:1252px;height:20px;background:#fafafa;"></div>
<svg style="left:340px;top:748px;" width="16" height="12" viewBox="0 0 16 12"><rect x="2.5" y="0.5" width="12" height="11" fill="#cfcfcf" stroke="#808080" stroke-width="1"/><rect x="2" y="0" width="2.8" height="12" fill="#7c7c7c"/><rect x="0" y="5" width="2.2" height="2" fill="#7c7c7c"/></svg>
<div style="left:379px;top:746px;width:26px;height:16px;background:#ffff00;"></div>
<span class="t" style="left:379.60px;top:745.50px;font-size:12px;line-height:18px;color:#111;letter-spacing:-0.592px;">Satel</span>
<span class="t" style="left:407.60px;top:745.50px;font-size:12px;line-height:18px;color:#111;letter-spacing:-0.290px;">sp. z o.o.</span>
<span class="t" style="left:590.00px;top:745.50px;font-size:12px;line-height:18px;color:#222;letter-spacing:-0.512px;">KNX-BSA12.230.6.1</span>
<span class="t" style="left:815.00px;top:745.50px;font-size:12px;line-height:18px;color:#222;letter-spacing:-0.500px;">KNX-BSA12H</span>
<span class="t" style="left:932.30px;top:745.50px;font-size:12px;line-height:18px;color:#222;letter-spacing:-1.322px;">TP</span>
<span class="t" style="left:1025.00px;top:745.50px;font-size:12px;line-height:18px;color:#222;letter-spacing:-0.046px;">Universal two-channel blind actuator (230 V AC)</span>
<span class="t" style="left:1364.00px;top:745.50px;font-size:12px;line-height:18px;color:#222;letter-spacing:-0.562px;">1.2</span>
<svg style="left:319px;top:748px;" width="18" height="12" viewBox="0 0 18 12"><path d="M3.8 10.6 Q1 10.6 1.2 8.4 Q1.4 7 3.2 5.8 Q3.6 3.8 5.6 3.6 Q6.6 3.4 7.4 2.6 Q9 0.8 11 1.6 Q12.2 2.2 13 4.2 Q13.6 5.4 15 6.2 Q16.8 7.2 16.6 8.8 Q16.4 10.6 14.4 10.6 Z" fill="#f3f7fb" stroke="#4a4a4a" stroke-width="0.9" stroke-linejoin="round"/><path d="M3 10.6 H15" stroke="#444" stroke-width="1.2"/></svg>
<div style="left:1px;top:998px;width:1567px;height:1px;background:#dcdcdc;"></div>
<div style="left:1px;top:999px;width:1567px;height:31px;background:#f3f4f6;"></div>
<div style="left:1px;top:1030px;width:1918px;height:1px;background:#f4eef4;"></div>
<span class="t" style="left:11.00px;top:1006.50px;font-size:12px;line-height:18px;color:#222;letter-spacing:-0.189px;">Items</span>
<div style="left:48px;top:1003px;width:60px;height:24px;background:#f6f6f7;border:1px solid #dcdcdc;box-sizing:border-box;"></div>
<span class="t" style="left:76.50px;top:1006.50px;font-size:12px;line-height:18px;color:#222;letter-spacing:-0.167px;">1</span>
<svg style="left:92.6px;top:1008px;" width="7" height="4" viewBox="0 0 7 4"><path d="M0.3 3.8 L3.4 0.3 L6.5 3.8 Z" fill="#555"/></svg>
<svg style="left:92.6px;top:1017.6px;" width="7" height="4" viewBox="0 0 7 4"><path d="M0.3 0.2 L3.4 3.7 L6.5 0.2 Z" fill="#a8a8a8"/></svg>
<span class="t" style="left:116.00px;top:1006.50px;font-size:12px;line-height:18px;color:#222;letter-spacing:0.078px;">in</span>
<div style="left:140px;top:1003px;width:150px;height:24px;background:#f1f1f2;border:1px solid #e2e2e2;box-sizing:border-box;"></div>
<span class="t" style="left:145.00px;top:1006.50px;font-size:12px;line-height:18px;color:#333;letter-spacing:-0.103px;">Building Parts</span>
<svg style="left:275px;top:1013px;" width="8" height="5" viewBox="0 0 8 5"><path d="M0.3 0.3 H7.7 L4 4.4 Z" fill="#222"/></svg>
<div style="left:296px;top:1003px;width:280px;height:24px;background:#f1f1f2;border:1px solid #e2e2e2;box-sizing:border-box;"></div>
<span class="t" style="left:300.80px;top:1006.50px;font-size:12px;line-height:18px;color:#333;letter-spacing:-0.341px;">Salon</span>
<svg style="left:560.7px;top:1013px;" width="8" height="5" viewBox="0 0 8 5"><path d="M0.3 0.3 H7.7 L4 4.4 Z" fill="#222"/></svg>
<div style="left:596px;top:1003px;width:60px;height:24px;background:#f4f4f4;border:1px solid #cfcfcf;box-sizing:border-box;"></div>
<span class="t" style="left:616.00px;top:1006.50px;font-size:12px;line-height:18px;color:#333;letter-spacing:-0.120px;">Add</span>
</div></body></html>
